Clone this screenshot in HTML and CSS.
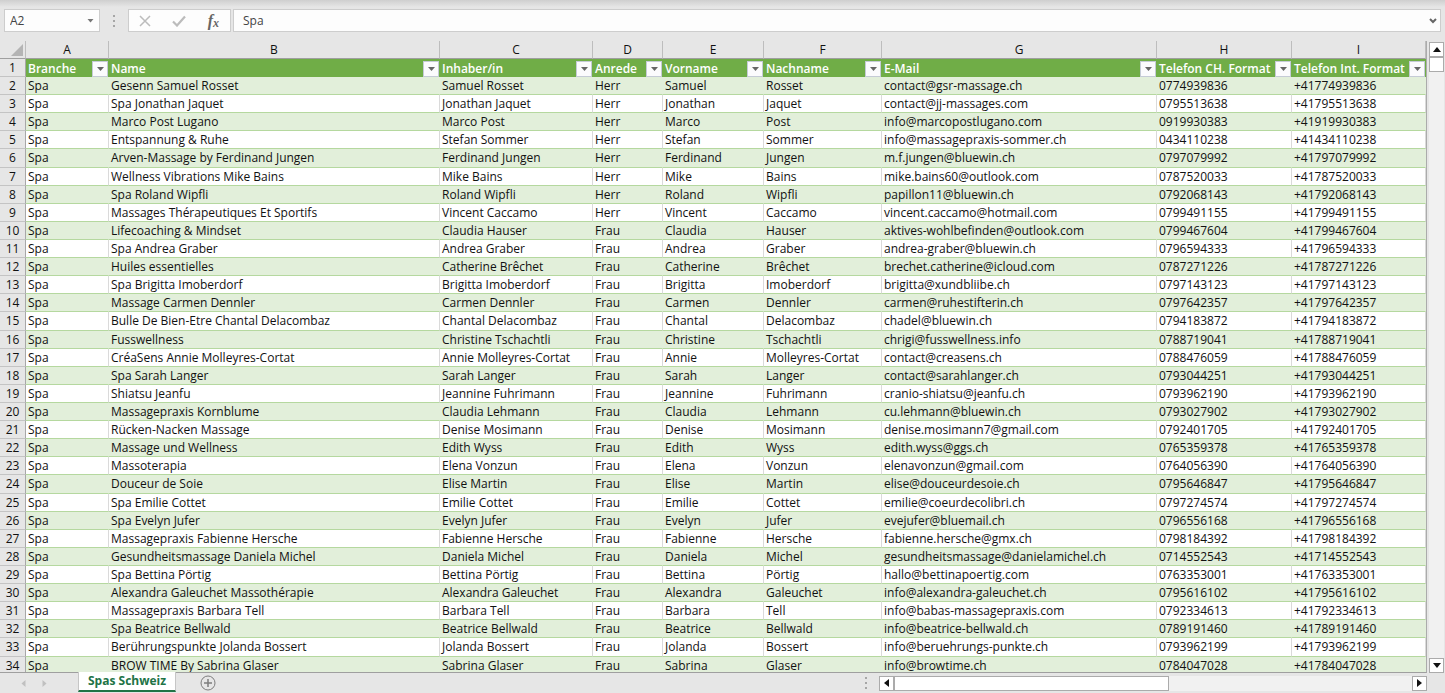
FILE: index.html
```
<!DOCTYPE html>
<html lang="de">
<head>
<meta charset="utf-8">
<title>Spas Schweiz</title>
<link rel="stylesheet" href="styles.css">
</head>
<body>
<header class="formula-bar">
  <div class="name-box">
    <input class="name-input" aria-label="Namenfeld" value="A2">
    <button class="plain" aria-label="Namen anzeigen"><svg width="7" height="4" viewBox="0 0 7 4"><path d="M0.5 0h6L3.500 3.500z" fill="#777"/></svg></button>
  </div>
  <svg class="grip" width="4" height="12" viewBox="0 0 4 12"><path d="M1 0h2v2H1zM1 5h2v2H1zM1 10h2v2H1z" fill="#a6a6a6"/></svg>
  <div class="tools">
    <button class="plain" aria-label="Abbrechen"><svg width="12" height="12" viewBox="0 0 12 12"><path d="M1 1l10 10M11 1L1 11" stroke="#bcbcbc" stroke-width="1.500" fill="none"/></svg></button>
    <button class="plain" aria-label="Eingeben"><svg width="14" height="12" viewBox="0 0 14 12"><path d="M1 6.500l4 4L13 1.500" stroke="#bcbcbc" stroke-width="2.200" fill="none"/></svg></button>
    <button class="plain fx" aria-label="Funktion einfügen"><i>f</i><i class="fx-x">x</i></button>
  </div>
  <div class="formula">
    <input class="formula-input" aria-label="Bearbeitungsleiste" value="Spa">
    <button class="plain" aria-label="Bearbeitungsleiste erweitern"><svg width="8" height="6" viewBox="0 0 8 6"><path d="M1 1l3 3 3-3" stroke="#666" stroke-width="2" fill="none"/></svg></button>
  </div>
</header>
<main class="workspace">
  <div class="sheet">
    <table class="grid">
      <colgroup>
        <col class="c-num"><col class="c-a"><col class="c-b"><col class="c-c"><col class="c-d"><col class="c-e"><col class="c-f"><col class="c-g"><col class="c-h"><col class="c-i">
      </colgroup>
      <thead>
        <tr class="letters"><th class="corner"><svg width="12" height="12" viewBox="0 0 12 12"><path d="M12 0v12H0z" fill="#b4b4b4"/></svg></th><th>A</th><th>B</th><th>C</th><th>D</th><th>E</th><th>F</th><th>G</th><th>H</th><th>I</th></tr>
        <tr class="titles" id="titles"><th class="num">1</th></tr>
      </thead>
      <tbody id="rows"></tbody>
    </table>
  </div>
  <div class="vscroll">
    <button class="step" aria-label="Nach oben"><svg width="8" height="5" viewBox="0 0 8 5"><path d="M4 0l4 5H0z" fill="#111"/></svg></button>
    <div class="vthumb"></div>
    <div class="vtrack"></div>
    <button class="step" aria-label="Nach unten"><svg width="8" height="5" viewBox="0 0 8 5"><path d="M0 0h8L4 5z" fill="#111"/></svg></button>
  </div>
</main>
<footer class="tabs">
  <div class="tab-area">
    <div class="tab-nav">
      <button class="plain" aria-label="Vorheriges Blatt"><svg width="5" height="7" viewBox="0 0 5 7"><path d="M4.500 0v7L0.500 3.500z" fill="#c0c0c0"/></svg></button>
      <button class="plain" aria-label="Nächstes Blatt"><svg width="5" height="7" viewBox="0 0 5 7"><path d="M0.500 0v7l4-3.500z" fill="#c0c0c0"/></svg></button>
    </div>
    <button class="tab">Spas Schweiz</button>
    <button class="plain" aria-label="Neues Blatt"><svg width="16" height="16" viewBox="0 0 16 16"><circle cx="8" cy="8" r="7" fill="none" stroke="#7d7d7d"/><path d="M8 4v8M4 8h8" stroke="#7d7d7d" stroke-width="1.500"/></svg></button>
  </div>
  <div class="scroll-area">
    <svg class="grip" width="4" height="12" viewBox="0 0 4 12"><path d="M1 0h2v2H1zM1 5h2v2H1zM1 10h2v2H1z" fill="#a6a6a6"/></svg>
    <div class="hscroll">
      <button class="step" aria-label="Nach links"><svg width="5" height="8" viewBox="0 0 5 8"><path d="M5 0v8L0 4z" fill="#111"/></svg></button>
      <div class="hthumb"></div>
      <div class="htrack"></div>
      <button class="step" aria-label="Nach rechts"><svg width="5" height="8" viewBox="0 0 5 8"><path d="M0 0v8l5-4z" fill="#111"/></svg></button>
    </div>
  </div>
</footer>
<script src="sheet.js"></script>
</body>
</html>
```
FILE: styles.css
```
* { box-sizing: border-box; }
body {
  margin: 0;
  height: 100vh;
  display: flex;
  flex-direction: column;
  background: #e6e6e6;
  font: 12px/16px "Open Sans", sans-serif;
  font-variant-ligatures: none;
  color: #111;
  overflow: hidden;
}
button, input { font: inherit; color: inherit; }
.plain {
  display: flex;
  align-items: center;
  justify-content: center;
  border: 0;
  padding: 0;
  background: none;
}
svg { display: block; flex: none; }

.formula-bar {
  display: flex;
  align-items: center;
  flex: none;
  height: 41px;
  padding: 0 4px;
  background: linear-gradient(#cfcfcf, #e6e6e6 7px);
}
.name-box, .tools, .formula {
  display: flex;
  align-items: center;
  height: 23px;
  border: 1px solid #cdcdcd;
  background: #fdfdfd;
  color: #444;
}
.name-box { width: 96px; padding-right: 5px; }
.name-input, .formula-input {
  flex: 1;
  min-width: 0;
  border: 0;
  padding: 0 5px;
  background: none;
  outline: 0;
}
.formula-bar .grip { margin: 0 12px; }
.tools { width: 103px; justify-content: space-between; padding: 0 11px 0 10px; }
.fx { font: 700 16px/16px "Liberation Serif", serif; color: #666; }
.fx-x { font-size: 12px; padding-top: 4px; }
.formula { flex: 1; margin-left: 2px; padding-right: 3px; }
.formula-input { padding: 0 9px; }

.workspace { flex: 1; min-height: 0; display: flex; }
.sheet {
  flex: 1;
  min-width: 0;
  overflow: hidden;
  border-right: 1px solid #ababab;
  border-bottom: 1px solid #9f9f9f;
}
.grid {
  width: 100%;
  height: calc(100% + 3px);
  table-layout: fixed;
  border-collapse: separate;
  border-spacing: 0;
}
.c-num { width: 26px; }
.c-a { width: 83px; }
.c-b { width: auto; }
.c-c { width: 153px; }
.c-d { width: 70px; }
.c-e { width: 101px; }
.c-f { width: 118px; }
.c-g { width: 275px; }
.c-h { width: 135px; }
.c-i { width: 134px; }
.grid th, .grid td {
  padding: 1px 2px 0;
  line-height: 16px;
  text-align: left;
  white-space: nowrap;
  overflow: hidden;
}
.grid .letters th {
  height: 18px;
  padding: 1px 0 0;
  font-weight: 400;
  text-align: center;
  border-right: 1px solid #bdbdbd;
  border-bottom: 1px solid #9f9f9f;
}
.grid .letters .corner { padding-left: 11px; }
.grid .num {
  padding: 1px 0 0;
  font-weight: 400;
  text-align: center;
  background: #e6e6e6;
  color: #111;
  border-right: 1px solid #a8a8a8;
  border-bottom: 1px solid #c4c4c4;
}
.grid .titles th { height: 18px; }
.titles th { background: #70ad47; color: #fff; font-weight: 600; }
.title { display: flex; align-items: center; justify-content: space-between; height: 17px; }
.filter {
  display: flex;
  align-items: center;
  justify-content: center;
  flex: none;
  width: 16px;
  height: 16px;
  margin-right: -1px;
  padding: 0;
  border: 1px solid #c5cbd6;
  background: #fbfbfd;
}
.grid td { background: #fff; border-right: 1px solid #dadada; border-bottom: 1px solid #b5d89f; }
.grid tr:nth-child(odd) td { background: #e2efda; border-right-color: #e2efda; }

.vscroll { display: flex; flex-direction: column; flex: none; width: 18px; padding: 1px 1px 0 2px; }
.step {
  display: flex;
  align-items: center;
  justify-content: center;
  flex: none;
  width: 15px;
  height: 15px;
  padding: 0;
  border: 1px solid #ababab;
  background: #fff;
}
.vthumb { width: 15px; height: 15px; border: 1px solid #ababab; background: #fff; }
.vtrack { flex: 1; width: 15px; background: #f1f1f1; }

.tabs { display: flex; flex: none; height: 20px; padding-right: 18px; }
.tab-area { flex: 1; display: flex; align-items: flex-start; }
.tab-nav { display: flex; align-items: center; gap: 16px; height: 20px; width: 78px; padding-left: 21px; }
.tab {
  height: 20px;
  margin: -1px 24px 0 0;
  padding: 0 9px;
  border: 1px solid #c6c6c6;
  border-top: 0;
  border-bottom: 2px solid #217346;
  background: #fff;
  color: #217346;
  font-weight: 700;
  line-height: 16px;
}
.tab-area > .plain { margin-top: 2px; }
.scroll-area { display: flex; align-items: center; gap: 11px; width: 563px; }
.hscroll { flex: 1; display: flex; }
.hthumb { width: 275px; height: 15px; border: 1px solid #ababab; background: #fff; }
.htrack { flex: 1; background: #f1f1f1; }
```
FILE: sheet.js
```
const titles = ["Branche", "Name", "Inhaber/in", "Anrede", "Vorname", "Nachname", "E-Mail", "Telefon CH. Format", "Telefon Int. Format"];

// Name | Anrede | Vorname | Nachname | E-Mail | Telefon
const data = `Gesenn Samuel Rosset|Herr|Samuel|Rosset|contact@gsr-massage.ch|0774939836
Spa Jonathan Jaquet|Herr|Jonathan|Jaquet|contact@jj-massages.com|0795513638
Marco Post Lugano|Herr|Marco|Post|info@marcopostlugano.com|0919930383
Entspannung & Ruhe|Herr|Stefan|Sommer|info@massagepraxis-sommer.ch|0434110238
Arven-Massage by Ferdinand Jungen|Herr|Ferdinand|Jungen|m.f.jungen@bluewin.ch|0797079992
Wellness Vibrations Mike Bains|Herr|Mike|Bains|mike.bains60@outlook.com|0787520033
Spa Roland Wipfli|Herr|Roland|Wipfli|papillon11@bluewin.ch|0792068143
Massages Thérapeutiques Et Sportifs|Herr|Vincent|Caccamo|vincent.caccamo@hotmail.com|0799491155
Lifecoaching & Mindset|Frau|Claudia|Hauser|aktives-wohlbefinden@outlook.com|0799467604
Spa Andrea Graber|Frau|Andrea|Graber|andrea-graber@bluewin.ch|0796594333
Huiles essentielles|Frau|Catherine|Brêchet|brechet.catherine@icloud.com|0787271226
Spa Brigitta Imoberdorf|Frau|Brigitta|Imoberdorf|brigitta@xundbliibe.ch|0797143123
Massage Carmen Dennler|Frau|Carmen|Dennler|carmen@ruhestifterin.ch|0797642357
Bulle De Bien-Etre Chantal Delacombaz|Frau|Chantal|Delacombaz|chadel@bluewin.ch|0794183872
Fusswellness|Frau|Christine|Tschachtli|chrigi@fusswellness.info|0788719041
CréaSens Annie Molleyres-Cortat|Frau|Annie|Molleyres-Cortat|contact@creasens.ch|0788476059
Spa Sarah Langer|Frau|Sarah|Langer|contact@sarahlanger.ch|0793044251
Shiatsu Jeanfu|Frau|Jeannine|Fuhrimann|cranio-shiatsu@jeanfu.ch|0793962190
Massagepraxis Kornblume|Frau|Claudia|Lehmann|cu.lehmann@bluewin.ch|0793027902
Rücken-Nacken Massage|Frau|Denise|Mosimann|denise.mosimann7@gmail.com|0792401705
Massage und Wellness|Frau|Edith|Wyss|edith.wyss@ggs.ch|0765359378
Massoterapia|Frau|Elena|Vonzun|elenavonzun@gmail.com|0764056390
Douceur de Soie|Frau|Elise|Martin|elise@douceurdesoie.ch|0795646847
Spa Emilie Cottet|Frau|Emilie|Cottet|emilie@coeurdecolibri.ch|0797274574
Spa Evelyn Jufer|Frau|Evelyn|Jufer|evejufer@bluemail.ch|0796556168
Massagepraxis Fabienne Hersche|Frau|Fabienne|Hersche|fabienne.hersche@gmx.ch|0798184392
Gesundheitsmassage Daniela Michel|Frau|Daniela|Michel|gesundheitsmassage@danielamichel.ch|0714552543
Spa Bettina Pörtig|Frau|Bettina|Pörtig|hallo@bettinapoertig.com|0763353001
Alexandra Galeuchet Massothérapie|Frau|Alexandra|Galeuchet|info@alexandra-galeuchet.ch|0795616102
Massagepraxis Barbara Tell|Frau|Barbara|Tell|info@babas-massagepraxis.com|0792334613
Spa Beatrice Bellwald|Frau|Beatrice|Bellwald|info@beatrice-bellwald.ch|0789191460
Berührungspunkte Jolanda Bossert|Frau|Jolanda|Bossert|info@beruehrungs-punkte.ch|0793962199
BROW TIME By Sabrina Glaser|Frau|Sabrina|Glaser|info@browtime.ch|0784047028`;

const titleRow = document.getElementById("titles");
for (const title of titles) {
  const th = document.createElement("th");
  th.innerHTML = `<div class="title"><span>${title}</span><button class="filter" aria-label="${title} filtern"><svg width="7" height="4" viewBox="0 0 7 4"><path d="M0 0h7L3.500 4z" fill="#666"/></svg></button></div>`;
  titleRow.append(th);
}

const body = document.getElementById("rows");
data.split("\n").forEach((line, i) => {
  const [name, salutation, first, last, mail, phone] = line.split("|");
  const row = body.insertRow();
  const num = document.createElement("th");
  num.className = "num";
  num.textContent = i + 2;
  row.append(num);
  for (const value of ["Spa", name, `${first} ${last}`, salutation, first, last, mail, phone, "+41" + phone.slice(1)]) {
    row.insertCell().textContent = value;
  }
});
```
